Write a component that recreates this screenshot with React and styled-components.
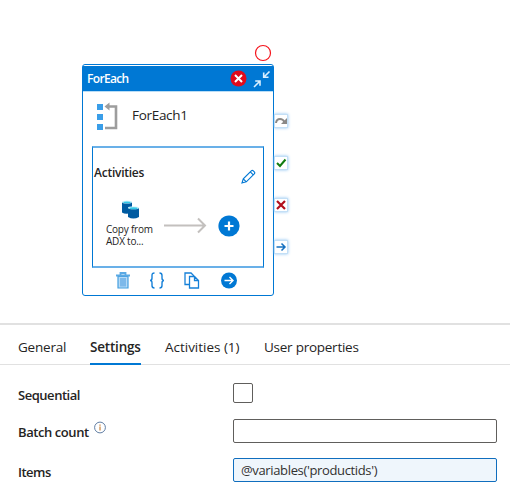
import styled, { createGlobalStyle } from "styled-components";
import { useState } from "react";

const GlobalStyle = createGlobalStyle`
  body {
    margin: 0;
    background-color: #ffffff;
    color: #252423;
    font-family: "Open Sans", "Noto Sans", sans-serif;
  }
`;

const Page = styled.div`
  box-sizing: border-box;
  width: 510px;
  height: 499px;
  display: flex;
  flex-direction: column;
  overflow: hidden;
`;

const Canvas = styled.div`
  position: relative;
  height: 323px;
  flex: none;
`;

const Marker = styled.svg`
  position: absolute;
  left: 254px;
  top: 44px;
`;

const Node = styled.div`
  box-sizing: border-box;
  position: absolute;
  left: 82px;
  top: 64px;
  width: 192px;
  height: 232px;
  border: 1px solid #0078d4;
  border-radius: 3px;
  background-color: #ffffff;
`;

const NodeHeader = styled.div`
  box-sizing: border-box;
  height: 26px;
  margin-top: 1px;
  padding: 0 2px 0 4px;
  border-bottom: 1px solid #b9ddf6;
  background-color: #0078d4;
  color: #ffffff;
  display: flex;
  align-items: center;
`;

const NodeType = styled.div`
  flex: 1;
  font-size: 12px;
  font-weight: 600;
  letter-spacing: -0.65px;
  line-height: 24px;
`;

const HeaderIcons = styled.div`
  display: flex;
  align-items: center;
  gap: 6px;
`;

const NodeTitle = styled.div`
  height: 54px;
  padding-left: 13px;
  display: flex;
  align-items: flex-start;
`;

const TitleIcon = styled.svg`
  margin-top: 10px;
`;

const NodeName = styled.div`
  margin: 13px 0 0 13px;
  font-size: 13.5px;
  line-height: 20px;
  letter-spacing: -0.3px;
`;

const Activities = styled.div`
  box-sizing: border-box;
  width: 172px;
  height: 122px;
  margin-left: 9px;
  border: 1px solid #0078d4;
  border-top: 2px solid #69b0e8;
  border-bottom: 2px solid #69b0e8;
`;

const ActivitiesHeader = styled.div`
  height: 47px;
  padding: 0 7px 0 1px;
  display: flex;
  justify-content: space-between;
`;

const ActivitiesTitle = styled.div`
  margin-top: 16px;
  font-size: 12px;
  font-weight: 600;
  line-height: 18px;
  letter-spacing: -0.25px;
`;

const PencilIcon = styled.svg`
  margin-top: 21px;
`;

const Flow = styled.div`
  display: flex;
  align-items: flex-start;
`;

const Copy = styled.div`
  width: 71px;
  padding-top: 5px;
  display: flex;
  flex-direction: column;
`;

const CopyIcon = styled.svg`
  margin-left: 28px;
`;

const CopyName = styled.div`
  margin: 4px 0 0 13px;
`;

const CopyLine = styled.div`
  font-size: 10px;
  line-height: 12px;
  letter-spacing: -0.22px;
  white-space: nowrap;
`;

const FlowArrow = styled.svg`
  margin-top: 22px;
`;

const AddIcon = styled.svg`
  margin: 20px 0 0 11px;
`;

const Actions = styled.div`
  height: 26px;
  padding-left: 32px;
  display: flex;
  align-items: center;
`;

const ActionButton = styled.div`
  width: ${(props) => props.$width}px;
  height: 18px;
  cursor: pointer;
`;

const Ports = styled.div`
  position: absolute;
  left: 274px;
  top: 114px;
  display: flex;
  flex-direction: column;
  gap: 28px;
`;

const Port = styled.div`
  box-sizing: border-box;
  width: 14px;
  height: 14px;
  border: 1px solid #c3dff6;
  background-color: #ffffff;
  box-shadow: 0 0 3px #8cc3f2;

  svg {
    display: block;
  }
`;

const Panel = styled.div`
  box-sizing: border-box;
  flex: 1;
  border-top: 2px solid #e1e1e1;
`;

const TabList = styled.div`
  box-sizing: border-box;
  height: 40px;
  padding-left: 18px;
  border-bottom: 1px solid #e1e1e1;
  display: flex;
  gap: 24px;
`;

const Tab = styled.div`
  box-sizing: border-box;
  width: ${(props) => props.$width}px;
  height: 40px;
  padding-top: 12px;
  border-bottom: 2px solid ${(props) => (props.$active ? "#0078d4" : "transparent")};
  font-size: 13.5px;
  font-weight: ${(props) => (props.$active ? 600 : 400)};
  line-height: 20px;
  letter-spacing: ${(props) => props.$spacing}px;
  white-space: nowrap;
  cursor: pointer;
`;

const Form = styled.div`
  padding: 18px 13px 0 18px;
`;

const Field = styled.div`
  display: flex;
  align-items: flex-start;
  height: ${(props) => props.$height}px;
`;

const Label = styled.label`
  width: 215px;
  flex: none;
  display: flex;
  padding-top: ${(props) => props.$offset}px;
  font-size: 13px;
  font-weight: 600;
  line-height: 20px;
  letter-spacing: ${(props) => props.$spacing}px;
`;

const InfoIcon = styled.svg`
  margin: -1px 0 0 4px;
`;

const Checkbox = styled.input`
  appearance: none;
  box-sizing: border-box;
  width: 20px;
  height: 20px;
  margin: 0;
  border: 1px solid #605e5c;
  border-radius: 2px;
  background-color: #ffffff;
`;

const TextInput = styled.input`
  box-sizing: border-box;
  width: 264px;
  height: 24px;
  margin: 0;
  padding: 0 7px;
  border: 1px solid ${(props) => (props.$dynamic ? "#106ebe" : "#605e5c")};
  border-radius: 2px;
  outline: none;
  background-color: ${(props) => (props.$dynamic ? "#eff6fc" : "#ffffff")};
  color: #323130;
  font-family: inherit;
  font-size: 13px;
  letter-spacing: -0.35px;
`;

const tabs = [
  { name: "General", width: 48, spacing: -0.2 },
  { name: "Settings", width: 51, spacing: -0.2 },
  { name: "Activities (1)", width: 75, spacing: -0.02 },
  { name: "User properties", width: 95, spacing: -0.25 },
];

function ForEachNode() {
  return (
    <Node>
      <NodeHeader>
        <NodeType>ForEach</NodeType>
        <HeaderIcons>
          <svg width="17" height="17" viewBox="0 0 17 17">
            <circle cx="8.5" cy="8.5" r="8" fill="#e00b1c" />
            <path d="M5 5l7 7M12 5l-7 7" stroke="#fff" strokeWidth="2" />
          </svg>
          <svg width="18" height="18" viewBox="0 0 18 18" fill="none" stroke="#d9efff" strokeWidth="1.6">
            <path d="M16.5 1.5L11 7M10.7 2.5v4.8h4.8M1 17l5.500-5.500M2.200 11h4.800v4.800" />
          </svg>
        </HeaderIcons>
      </NodeHeader>

      <NodeTitle>
        <TitleIcon width="23" height="30" viewBox="0 0 23 30">
          <path d="M1 2h6v6H1zM1 12h6v6H1zM1 22h6v6H1z" fill="#3a9ee8" />
          <path d="M11 4.500h9V26H9" fill="none" stroke="#9d9d9d" strokeWidth="2.6" />
          <path d="M8.500 4.500l5-4v8z" fill="#9d9d9d" />
        </TitleIcon>
        <NodeName>ForEach1</NodeName>
      </NodeTitle>

      <Activities>
        <ActivitiesHeader>
          <ActivitiesTitle>Activities</ActivitiesTitle>
          <PencilIcon width="15" height="15" viewBox="0 0 15 15" fill="none" stroke="#0078d4" strokeWidth="1.150">
            <path d="M1 14l1.300-4.200 8-8q1-1 2 0l1 1q1 1 0 2l-8 8zM2.300 9.800l3 3M9.300 2.800l3 3" />
          </PencilIcon>
        </ActivitiesHeader>
        <Flow>
          <Copy>
            {/* two stacked databases */}
            <CopyIcon width="19" height="19" viewBox="0 0 19 19">
              <path d="M1 2v10.500q4 2.500 10 0V2z" fill="#005ba1" />
              <ellipse cx="6" cy="2" rx="5" ry="1.500" fill="#d3f3fb" />
              <ellipse cx="6" cy="2.300" rx="3.800" ry="0.900" fill="#32c8e8" />
              <path d="M7 8v9q5.300 3 11 0V8z" fill="#005ba1" />
              <ellipse cx="12.500" cy="7.800" rx="5.500" ry="1.500" fill="#d3f3fb" />
              <ellipse cx="12.500" cy="8.200" rx="4.200" ry="1" fill="#32c8e8" />
            </CopyIcon>
            <CopyName>
              <CopyLine>Copy from</CopyLine>
              <CopyLine>ADX to...</CopyLine>
            </CopyName>
          </Copy>
          <FlowArrow width="43" height="18" viewBox="0 0 43 18" fill="none" stroke="#c3c0be" strokeWidth="2">
            <path d="M0 8.500h41M34 1.500l7 7-7 7" />
          </FlowArrow>
          <AddIcon width="22" height="22" viewBox="0 0 22 22">
            <circle cx="11" cy="11" r="10.600" fill="#0078d4" />
            <path d="M11 6.500v9M6.500 11h9" stroke="#fff" strokeWidth="2.200" />
          </AddIcon>
        </Flow>
      </Activities>

      <Actions>
        <ActionButton $width={34}>
          <svg width="16" height="18" viewBox="0 0 16 18">
            <path d="M3 4.500h10V16H3z" fill="#b5daf6" stroke="#459fe0" strokeWidth="1.200" />
            <path d="M5 6h6v8.500H5z" fill="#7db9ea" />
            <path d="M1 3.500h14M5.500 3V1h5v2" fill="none" stroke="#5aa9e4" strokeWidth="1.800" />
          </svg>
        </ActionButton>
        <ActionButton $width={35}>
          <svg width="16" height="18" viewBox="0 0 16 18" fill="none" stroke="#1680d8" strokeWidth="1.400">
            <path d="M5.500 1Q3 1 3 3.500V6q0 2.500-2 2.500 2 0 2 2.500v2.500q0 2.500 2.500 2.500M10.500 1Q13 1 13 3.500V6q0 2.500 2 2.500-2 0-2 2.500v2.500q0 2.500-2.500 2.500" />
          </svg>
        </ActionButton>
        <ActionButton $width={36}>
          <svg width="16" height="18" viewBox="0 0 16 18" fill="#fff" stroke="#1680d8" strokeWidth="1.300">
            <path d="M5.500 12.500H1V1h6l3 3" />
            <path d="M5.500 4.500h5l4 4V16h-9zM10.500 4.500v4h4" />
          </svg>
        </ActionButton>
        <ActionButton $width={18}>
          <svg width="18" height="18" viewBox="0 0 18 18">
            <circle cx="9" cy="8.500" r="8" fill="#0078d4" />
            <path d="M4.500 8.500H13M9.500 5l3.500 3.500L9.500 12" fill="none" stroke="#fff" strokeWidth="1.400" />
          </svg>
        </ActionButton>
      </Actions>
    </Node>
  );
}

function NodePorts() {
  return (
    <Ports>
      <Port>
        <svg width="12" height="12" viewBox="0 0 12 12">
          <path d="M1 8q.5-4 4-4 3 0 4.500 3" fill="none" stroke="#8a8886" strokeWidth="2" />
          <path d="M12 3v6H6z" fill="#8a8886" />
        </svg>
      </Port>
      <Port>
        <svg width="12" height="12" viewBox="0 0 12 12" fill="none" stroke="#107c10" strokeWidth="2">
          <path d="M2 6l3 3 5.500-6.500" />
        </svg>
      </Port>
      <Port>
        <svg width="12" height="12" viewBox="0 0 12 12" stroke="#b10e1c" strokeWidth="2.200">
          <path d="M2 2l8 8M10 2l-8 8" />
        </svg>
      </Port>
      <Port>
        <svg width="12" height="12" viewBox="0 0 12 12" fill="none" stroke="#1570c0" strokeWidth="1.500">
          <path d="M1.500 6H10M6.500 2.500L10 6 6.500 9.500" />
        </svg>
      </Port>
    </Ports>
  );
}

function App() {
  // currently open tab
  const [active, setActive] = useState("Settings");
  const [batchCount, setBatchCount] = useState("");
  const [items, setItems] = useState("@variables('productids')");

  return (
    <Page>
      <GlobalStyle />
      {/* pipeline canvas */}
      <Canvas>
        <Marker width="18" height="18" viewBox="0 0 18 18">
          <circle cx="9" cy="9" r="7.500" fill="none" stroke="#f5141c" strokeWidth="1.200" />
        </Marker>
        <ForEachNode />
        <NodePorts />
      </Canvas>

      {/* properties panel */}
      <Panel>
        <TabList>
          {tabs.map((tab) => (
            <Tab
              key={tab.name}
              $width={tab.width}
              $spacing={tab.spacing}
              $active={tab.name === active}
              onClick={() => setActive(tab.name)}
            >
              {tab.name}
            </Tab>
          ))}
        </TabList>
        <Form>
          <Field $height={36}>
            <Label $offset={2} $spacing={-0.47}>Sequential</Label>
            <Checkbox type="checkbox" />
          </Field>
          <Field $height={39}>
            <Label $offset={3} $spacing={-0.42}>
              Batch count
              <InfoIcon width="14" height="14" viewBox="0 0 14 14">
                <circle cx="7" cy="6.500" r="5.400" fill="none" stroke="#4f6f98" strokeWidth="0.900" />
                <path d="M7 3.500v1.200M7 5.500v4" stroke="#cf8b45" strokeWidth="1.300" />
              </InfoIcon>
            </Label>
            <TextInput value={batchCount} onChange={(e) => setBatchCount(e.target.value)} />
          </Field>
          <Field $height={24}>
            <Label $offset={4} $spacing={-0.5}>Items</Label>
            <TextInput $dynamic value={items} onChange={(e) => setItems(e.target.value)} />
          </Field>
        </Form>
      </Panel>
    </Page>
  );
}

export default App;
